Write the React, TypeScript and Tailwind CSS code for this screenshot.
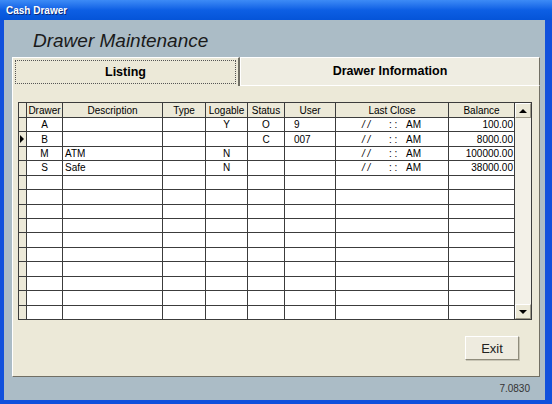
import React from "react";

const rows = [
  { drawer: "A", desc: "", type: "", log: "Y", status: "O", user: "9", close: true, bal: "100.00" },
  { drawer: "B", desc: "", type: "", log: "", status: "C", user: "007", close: true, bal: "8000.00", current: true },
  { drawer: "M", desc: "ATM", type: "", log: "N", status: "", user: "", close: true, bal: "100000.00" },
  { drawer: "S", desc: "Safe", type: "", log: "N", status: "", user: "", close: true, bal: "38000.00" },
];

const headers = ["Drawer", "Description", "Type", "Logable", "Status", "User", "Last Close", "Balance"];

const cell = "border-r border-b border-[#3c3c3c] bg-white overflow-hidden whitespace-nowrap leading-[13px] flex items-center";

const LastClose = () => (
  <>
    <span className="ml-[26px] w-[27px] italic">/ /</span>
    <span className="w-[17px]">: :</span>
    <span>AM</span>
  </>
);

const App: React.FC = () => {
  const blank = Array.from({ length: 14 - rows.length });
  return (
    <div
      className="w-[552px] h-[404px] flex flex-col bg-[#1050dc] text-black select-none"
      style={{ fontFamily: '"Liberation Sans", Arial, sans-serif' }}
    >
      {/* title bar */}
      <div className="h-[20px] flex items-center pl-[6px] bg-linear-to-b from-[#3d8bf6] via-[#0d5fe4] to-[#0554d8]">
        <span className="text-white font-bold text-[10px] [text-shadow:1px_1px_0_#0a2a7a]">Cash Drawer</span>
      </div>

      <div className="flex h-[380px]">
        <div className="w-[4px] bg-[#1050dc]" />
        <div className="w-[541px] bg-[#abbcc6] flex flex-col">
          <div className="pt-[10px] pl-[29px] h-[32px]">
            <h1 className="text-[19px] italic leading-[22px] text-[#1a1a1a]">Drawer Maintenance</h1>
          </div>

          {/* tab panel */}
          <div className="mt-[5px] ml-[8px] w-[528px] h-[320px] flex flex-col">
            <div className="h-[29px] flex">
              <div className="w-[228px] bg-[#ece9d8] border-l border-t border-white border-r-2 border-r-[#716f64] p-[2px] flex">
                <div className="flex-1 border border-dotted border-[#555] flex items-center justify-center">
                  <span className="font-bold text-[12.5px]">Listing</span>
                </div>
              </div>
              <div className="flex-1 bg-[#efede2] border-t border-l border-white border-b border-b-white border-r border-r-[#716f64] flex items-center justify-center">
                <span className="font-bold text-[12.5px]">Drawer Information</span>
              </div>
            </div>

            <div className="flex-1 bg-[#ece9d8] border-l border-white border-r border-r-[#716f64] border-b border-b-[#716f64] pl-[5px] pt-[16px] flex flex-col">
              {/* grid */}
              <div className="flex h-[218px] w-[514px]">
                <div className="grid grid-cols-[8px_36px_100px_43px_42px_37px_51px_113px_66px] grid-rows-[15px_repeat(14,minmax(0,1fr))] border-l border-t border-[#3c3c3c] h-[218px] text-[10px]">
                  <div className="border-r border-b border-[#3c3c3c] bg-[#ece9d8]" />
                  {headers.map((h) => (
                    <div
                      key={h}
                      className="border-r border-b border-[#3c3c3c] bg-[#ece9d8] flex items-center justify-center leading-[13px] whitespace-nowrap"
                    >
                      {h}
                    </div>
                  ))}
                  {rows.map((r) => (
                    <React.Fragment key={r.drawer}>
                      <div className="border-r border-b border-[#3c3c3c] bg-[#ece9d8] flex items-center pl-[1px]">
                        {r.current && (
                          <span className="w-0 h-0 border-y-[4px] border-y-transparent border-l-[4px] border-l-black" />
                        )}
                      </div>
                      <div className={`${cell} justify-center`}>{r.drawer}</div>
                      <div className={`${cell} pl-[2px]`}>{r.desc}</div>
                      <div className={cell}>{r.type}</div>
                      <div className={`${cell} justify-center`}>{r.log}</div>
                      <div className={`${cell} justify-center`}>{r.status}</div>
                      <div className={`${cell} pl-[9px]`}>{r.user}</div>
                      <div className={cell}>{r.close && <LastClose />}</div>
                      <div className={`${cell} justify-end pr-[1px]`}>{r.bal}</div>
                    </React.Fragment>
                  ))}
                  {blank.map((_, i) => (
                    <React.Fragment key={i}>
                      <div className="border-r border-b border-[#3c3c3c] bg-[#ece9d8]" />
                      {headers.map((h) => (
                        <div key={h} className={cell} />
                      ))}
                    </React.Fragment>
                  ))}
                </div>

                {/* scrollbar */}
                <div className="w-[17px] h-[218px] border-t border-b border-r border-[#3c3c3c] bg-[#f3f1e8] flex flex-col justify-between">
                  <div className="h-[15px] bg-[#ece9d8] border-t border-l border-white border-r border-b border-r-[#9d9a8a] border-b-[#9d9a8a] flex items-center justify-center">
                    <span className="w-0 h-0 border-x-[4px] border-x-transparent border-b-[4px] border-b-black" />
                  </div>
                  <div className="h-[15px] bg-[#ece9d8] border-t border-l border-white border-r border-b border-r-[#9d9a8a] border-b-[#9d9a8a] flex items-center justify-center">
                    <span className="w-0 h-0 border-x-[4px] border-x-transparent border-t-[4px] border-t-black" />
                  </div>
                </div>
              </div>

              <div className="flex justify-end pr-[20px] mt-[16px]">
                <button className="w-[54px] h-[24px] bg-[#eeebdf] border border-t-white border-l-white border-r-[#8f8c7c] border-b-[#8f8c7c] shadow-[1px_1px_0_#c9c6b6] text-[13px] text-[#222] leading-none">
                  Exit
                </button>
              </div>
            </div>
          </div>

          <div className="flex-1 flex items-center justify-end pr-[15px]">
            <span className="text-[10px] text-[#333]">7.0830</span>
          </div>
        </div>
        <div className="flex-1 bg-[#1050dc]" />
      </div>
      <div className="flex-1 bg-[#1050dc]" />
    </div>
  );
};

export default App;
